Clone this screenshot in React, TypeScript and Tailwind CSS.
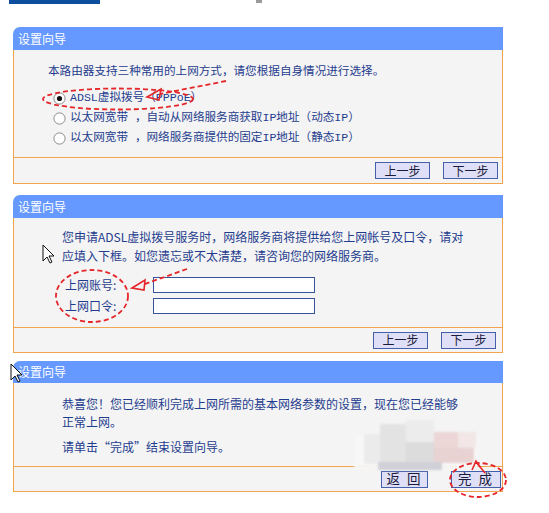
import type { ReactNode } from 'react';

const cjk = { fontFamily: '"Noto Sans CJK SC", "Noto Sans", sans-serif' };
const mono = { fontFamily: '"Liberation Mono", "Noto Sans CJK SC", monospace' };

function Radio({ checked }: { checked?: boolean }) {
  return (
    <svg width="13" height="13" viewBox="0 0 13 13" className="flex-shrink-0">
      <circle cx="6.5" cy="6.5" r="5.6" fill="#fff" stroke="#8a8a8a" strokeWidth="1" />
      {checked && <circle cx="6.5" cy="6.5" r="2.6" fill="#111" />}
    </svg>
  );
}

function Btn({ label, w, size = 'text-[12px]' }: { label: string; w: string; size?: string }) {
  return (
    <div
      className={`${w} h-[17px] flex items-center justify-center border border-[#4560aa] bg-[#dfe0f8] ${size} text-[#1a1a3a] leading-none`}
    >
      {label}
    </div>
  );
}

function Panel({
  className,
  headerH,
  children,
  footer,
  footerH,
  footerCls,
}: {
  className: string;
  headerH: string;
  children: ReactNode;
  footer: ReactNode;
  footerH: string;
  footerCls: string;
}) {
  return (
    <div className={`ml-[13px] w-[490px] ${className}`}>
      <div className={`${headerH} rounded-tl-[7px] bg-[#6699ff] pl-[5px] flex items-center text-[12px] text-white`}>
        设置向导
      </div>
      <div className="border-x border-[#f2a54e] bg-[#f4f4f4]">{children}</div>
      <div className={`${footerH} border border-[#f2a54e] bg-[#f4f4f4] flex items-center justify-end ${footerCls}`}>
        {footer}
      </div>
    </div>
  );
}

export default function App() {
  return (
    <div className="relative w-[549px] h-[513px] bg-white overflow-hidden text-[#1f3c8e]" style={cjk}>
      <div className="flex h-[4px]">
        <div className="ml-[9px] w-[91px] h-[4px] bg-[#0d4f9e]" />
        <div className="ml-[156px] w-[6px] h-[3px] bg-[#9a9a9a]" />
      </div>

      <Panel
        className="mt-[23px]"
        headerH="h-[23px]"
        footerH="h-[27px]"
        footerCls="gap-[13px] pr-[4px]"
        footer={
          <>
            <Btn label="上一步" w="w-[55px]" />
            <Btn label="下一步" w="w-[55px]" />
          </>
        }
      >
        <div className="pt-[10px] pb-[9px]">
          <div className="pl-[34px] h-[20px] leading-[20px] text-[11.6px]">
            本路由器支持三种常用的上网方式，请您根据自身情况进行选择。
          </div>
          <div className="mt-[8px] pl-[39px] text-[11.6px]" style={mono}>
            <div className="h-[20px] flex items-center gap-[4px]">
              <Radio checked />
              <span>ADSL虚拟拨号（PPPoE）</span>
            </div>
            <div className="h-[20px] flex items-center gap-[4px]">
              <Radio />
              <span>以太网宽带 ，自动从网络服务商获取IP地址（动态IP）</span>
            </div>
            <div className="h-[20px] flex items-center gap-[4px]">
              <Radio />
              <span>以太网宽带 ，网络服务商提供的固定IP地址（静态IP）</span>
            </div>
          </div>
        </div>
      </Panel>

      <Panel
        className="mt-[11px]"
        headerH="h-[23px]"
        footerH="h-[26px]"
        footerCls="gap-[13px] pr-[6px]"
        footer={
          <>
            <Btn label="上一步" w="w-[55px]" />
            <Btn label="下一步" w="w-[55px]" />
          </>
        }
      >
        <div className="pt-[9px] pb-[11px]">
          <div className="pl-[48px] text-[12px] leading-[19px]">
            <div>您申请ADSL虚拟拨号服务时，网络服务商将提供给您上网帐号及口令，请对</div>
            <div>应填入下框。如您遗忘或不太清楚，请咨询您的网络服务商。</div>
          </div>
          <div className="mt-[9px] pl-[51px] text-[12px]">
            <div className="h-[21px] flex items-center">
              <span className="w-[88px]">上网账号:</span>
              <div className="w-[162px] h-[16px] border border-[#36549c] bg-white" />
            </div>
            <div className="h-[21px] flex items-center">
              <span className="w-[88px]">上网口令:</span>
              <div className="w-[162px] h-[16px] border border-[#36549c] bg-white" />
            </div>
          </div>
        </div>
      </Panel>

      <Panel
        className="mt-[8px]"
        headerH="h-[22px]"
        footerH="h-[26px]"
        footerCls="gap-[23px] pr-[1px]"
        footer={
          <>
            <Btn label="返 回" w="w-[47px]" size="text-[13.5px] tracking-[2px]" />
            <Btn label="完 成" w="w-[50px]" size="text-[13.5px] tracking-[2px]" />
          </>
        }
      >
        <div className="pt-[12px] pb-[10px] pl-[48px] text-[12px] leading-[18px]">
          <div>恭喜您！您已经顺利完成上网所需的基本网络参数的设置，现在您已经能够</div>
          <div>正常上网。</div>
          <div className="mt-[7px]">请单击“完成”结束设置向导。</div>
        </div>
      </Panel>

      <svg
        className="absolute left-0 top-0 pointer-events-none"
        width="549"
        height="513"
        viewBox="0 0 549 513"
      >
        <defs>
          <filter id="blur">
            <feGaussianBlur stdDeviation="1.2" />
          </filter>
        </defs>
        {/* pixelated watermark */}
        <g filter="url(#blur)">
          <rect x="354" y="436" width="124" height="32" fill="#f7f7f7" />
          <rect x="364" y="434" width="16" height="30" fill="#ebebeb" />
          <rect x="380" y="424" width="26" height="40" fill="#e3e3e3" />
          <rect x="406" y="420" width="28" height="22" fill="#ececec" />
          <rect x="406" y="442" width="28" height="22" fill="#dcdcdc" />
          <rect x="434" y="432" width="24" height="16" fill="#ecd6d6" />
          <rect x="458" y="432" width="18" height="16" fill="#f2e6e6" />
          <rect x="434" y="448" width="40" height="15" fill="#e8d2d2" />
          <rect x="378" y="462" width="64" height="8" fill="#cfd0d8" />
        </g>

        {/* red marks */}
        <g fill="none" stroke="#e5262a" strokeWidth="1.8" strokeDasharray="5 3">
          <ellipse cx="118" cy="99" rx="75" ry="10.5" />
          <path d="M226 81 L160 94" />
          <ellipse cx="92" cy="296" rx="36" ry="26" />
          <path d="M187 269 L142 285" />
          <ellipse cx="478" cy="480" rx="28" ry="17" />
        </g>
        <g fill="none" stroke="#e5262a" strokeWidth="1.6">
          <path d="M147 97 L161 89 L159 100 Z" />
          <path d="M132 288 L145 280 L144 290 Z" />
          <path d="M472 470 L476 461 L481 468 M476 462 L485 473" />
        </g>

        {/* cursors */}
        <path
          d="M43 245 L43 261 L47 257 L50 263 L52 262 L49 256 L54 256 Z"
          fill="#fff"
          stroke="#111"
          strokeWidth="1"
        />
        <path
          d="M11 364 L11 380 L15 376 L18 382 L20 381 L17 375 L22 375 Z"
          fill="#fff"
          stroke="#111"
          strokeWidth="1"
        />
      </svg>
    </div>
  );
}
